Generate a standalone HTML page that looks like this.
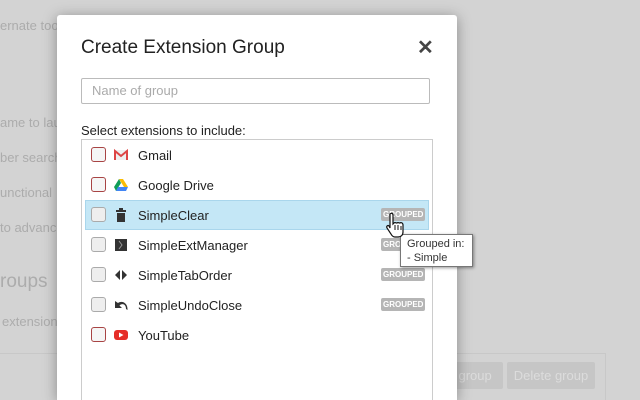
<!DOCTYPE html>
<html style="overflow:hidden;height:400px"><head><style>
html,body{overflow:hidden}
body{margin:0;width:640px;height:400px;overflow:hidden;background:#d3d3d3;font-family:"Liberation Sans",sans-serif;position:relative}
.bg{position:absolute;color:#acacac;font-size:13px}
.modal{position:absolute;left:57px;top:15px;width:400px;height:385px;background:#fff;border-radius:3px 3px 0 0;box-shadow:0 2px 14px rgba(0,0,0,.35);overflow:hidden}
h1{position:absolute;left:24px;top:22px;margin:0;font-weight:normal;font-size:19px;color:#222}
.x{position:absolute;left:360px;top:20px;font-size:20px;font-weight:bold;color:#444}
.inp{position:absolute;left:24px;top:63px;height:24px;border:1px solid #bbb;border-radius:2px;color:#aaa;font-size:13px;line-height:24px;padding-left:10px;width:337px}
.lbl{position:absolute;left:24px;top:108px;font-size:13px;color:#222}
.list{position:absolute;left:24px;top:124px;width:350px;height:260px;border:1px solid #ccc;border-bottom:none}
.row{position:absolute;left:3px;width:344px;height:30px}
.row.hl{background:#c4e7f6;border:1px solid #a9d6ec;box-sizing:border-box}
.cb{position:absolute;left:6px;top:7px;width:13px;height:13px;border:1px solid #aaa;border-radius:3px;background:#eee}
.cb.r{border-color:#a84444;background:#f5f5f5}
.ic{position:absolute;left:29px;top:8px;width:14px;height:14px}
.t{position:absolute;left:53px;top:8px;font-size:13px;color:#222}
.g{position:absolute;left:296px;top:8px;background:#b5b5b5;color:#fff;font-size:8px;font-weight:bold;padding:2px 2px;border-radius:2px}
.tip{position:absolute;left:400px;top:234px;width:73px;height:33px;background:#fff;border:1px solid #777;box-shadow:1px 1px 3px rgba(0,0,0,.4);font-size:11px;color:#333;line-height:14px;padding:2px 0 0 6px;box-sizing:border-box}
.btn{position:absolute;top:362px;height:27px;background:#c6c6c6;color:#dcdcdc;font-size:13px;line-height:27px;text-align:center;border-radius:2px}
</style></head><body>
<div class="bg" style="left:0;top:18px">ernate too</div>
<div class="bg" style="left:0;top:115px">ame to lau</div>
<div class="bg" style="left:0;top:150px">ber search</div>
<div class="bg" style="left:0;top:185px">unctional</div>
<div class="bg" style="left:0;top:220px">to advance</div>
<div class="bg" style="left:0;top:271px;font-size:19px">roups</div>
<div class="bg" style="left:2px;top:314px">extensions</div>
<div style="position:absolute;left:0;top:353px;width:60px;border-top:1px solid #c8c8c8"></div>
<div style="position:absolute;left:450px;top:353px;width:154px;height:46px;border:1px solid #c8c8c8;border-bottom:none"></div>
<div class="btn" style="left:440px;width:63px">t group</div>
<div class="btn" style="left:507px;width:88px">Delete group</div>
<div class="modal">
<h1>Create Extension Group</h1>
<div class="x">✕</div>
<div class="inp">Name of group</div>
<div class="lbl">Select extensions to include:</div>
<div class="list">
<div class="row" style="top:0"><div class="cb r"></div><svg class="ic" viewBox="0 0 14 14"><rect x="0" y="2" width="14" height="10" fill="#eee"/><path d="M1 12V3l6 5 6-5v9" fill="none" stroke="#d44" stroke-width="2"/></svg><div class="t">Gmail</div></div>
<div class="row" style="top:30px"><div class="cb r"></div><svg class="ic" viewBox="0 0 14 14"><path d="M5 1h4l5 8H10z" fill="#fbbc04"/><path d="M5 1L0 9l2 4 5-8z" fill="#0f9d58"/><path d="M2 13h10l2-4H4z" fill="#4285f4"/></svg><div class="t">Google Drive</div></div>
<div class="row hl" style="top:60px"><div class="cb" style="left:5px;top:6px"></div><svg class="ic" viewBox="0 0 14 14" style="left:28px;top:7px"><rect x="2" y="2" width="10" height="2" fill="#333"/><rect x="5" y="0" width="4" height="2" fill="#333"/><rect x="3" y="5" width="8" height="9" fill="#333"/></svg><div class="t" style="left:52px;top:7px">SimpleClear</div><div class="g" style="left:295px;top:7px">GROUPED</div></div>
<div class="row" style="top:90px"><div class="cb"></div><svg class="ic" viewBox="0 0 14 14"><rect x="1" y="1" width="12" height="12" fill="#333"/><path d="M5 3l3 4-3 4" stroke="#999" fill="none"/></svg><div class="t">SimpleExtManager</div><div class="g">GROUPED</div></div>
<div class="row" style="top:120px"><div class="cb"></div><svg class="ic" viewBox="0 0 14 14"><path d="M6 2L1 7l5 5zM8 2l5 5-5 5z" fill="#333"/></svg><div class="t">SimpleTabOrder</div><div class="g">GROUPED</div></div>
<div class="row" style="top:150px"><div class="cb"></div><svg class="ic" viewBox="0 0 14 14"><path d="M1 3v7h7L5.5 7.5C8 5 12 6 12 11l1.5 1C14 5 8 2 4 5z" fill="#333"/></svg><div class="t">SimpleUndoClose</div><div class="g">GROUPED</div></div>
<div class="row" style="top:180px"><div class="cb r"></div><svg class="ic" viewBox="0 0 14 14"><rect x="0" y="2" width="14" height="10" rx="3" fill="#e52d27"/><path d="M5 4.5v5l4.5-2.5z" fill="#fff"/></svg><div class="t">YouTube</div></div>
</div>
</div>
<div class="tip">Grouped in:<br>- Simple</div>
<svg style="position:absolute;left:386px;top:212px" width="22" height="30" viewBox="0 0 22 30"><path d="M4 2c1-1 3-1 3 1v9l1-1c1-1 2 0 3 0 1-1 2 0 3 0 1-1 3 0 3 2v7c0 3-2 5-5 5H9c-2 0-3-1-4-3l-4-6c-1-2 1-3 2-2l1 2z" fill="#fff" stroke="#111" stroke-width="1.2"/><path d="M9 13v5M12 13v5M15 14v4" stroke="#111"/></svg>
</body></html>
